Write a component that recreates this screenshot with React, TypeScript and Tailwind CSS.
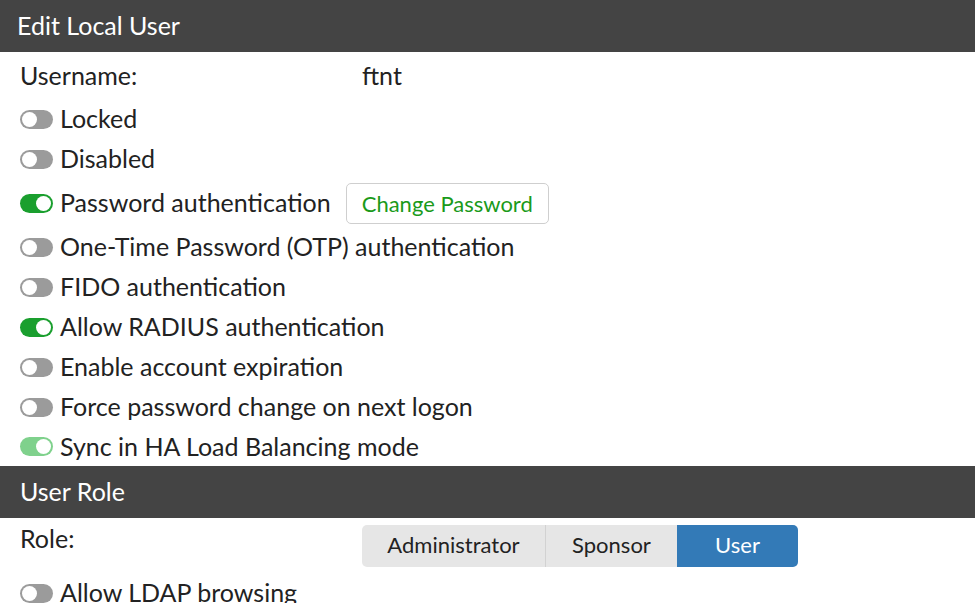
import React from 'react';

type ToggleState = 'off' | 'on' | 'onDisabled';

const Toggle: React.FC<{ state: ToggleState }> = ({ state }) => {
  const track =
    state === 'on' ? 'bg-[#1a9f2e]' : state === 'onDisabled' ? 'bg-[#7fd18c]' : 'bg-[#9b9b9b]';
  return (
    <span className={`relative inline-flex w-[33px] h-[19px] rounded-full shrink-0 ${track}`}>
      <span
        className={`absolute top-[2px] w-[15px] h-[15px] rounded-full bg-white ${
          state === 'off' ? 'left-[2px]' : 'right-[2px]'
        }`}
      />
    </span>
  );
};

const ToggleRow: React.FC<{ label: string; state?: ToggleState; h?: string; children?: React.ReactNode }> = ({
  label,
  state = 'off',
  h = 'h-[40px]',
  children,
}) => (
  <div className={`flex items-center ${h}`}>
    <Toggle state={state} />
    <span className="ml-[7px]">{label}</span>
    {children}
  </div>
);

const SectionHeader: React.FC<{ title: string; pl: string }> = ({ title, pl }) => (
  <div className={`h-[52px] bg-[#444444] text-white flex items-center ${pl} text-[25px]`}>{title}</div>
);

export default function App() {
  return (
    <div className="w-[975px] h-[603px] overflow-hidden bg-white text-[#222] text-[25px] font-['Lato','Noto_Sans',sans-serif]">
      <SectionHeader title="Edit Local User" pl="pl-[17px]" />

      <div className="pl-[20px]">
        <div className="flex items-center h-[40px] mt-[4px]">
          <span className="w-[342px]">Username:</span>
          <span>ftnt</span>
        </div>
        <div className="mt-[3px]">
          <ToggleRow label="Locked" />
        </div>
        <ToggleRow label="Disabled" />
        <ToggleRow label="Password authentication" state="on" h="h-[48px]">
          <button className="ml-[15px] h-[41px] px-[15px] border border-[#cfcfcf] rounded-[5px] text-[#1a9a1a] text-[22px]">
            Change Password
          </button>
        </ToggleRow>
        <ToggleRow label="One-Time Password (OTP) authentication" />
        <ToggleRow label="FIDO authentication" />
        <ToggleRow label="Allow RADIUS authentication" state="on" />
        <ToggleRow label="Enable account expiration" />
        <ToggleRow label="Force password change on next logon" />
        <ToggleRow label="Sync in HA Load Balancing mode" state="onDisabled" h="h-[39px]" />
      </div>

      <SectionHeader title="User Role" pl="pl-[20px]" />

      <div className="pl-[20px]">
        <div className="flex items-start pt-[7px]">
          <span className="w-[342px] leading-[26px]">Role:</span>
          <div className="flex h-[42px] rounded-[5px] overflow-hidden text-[22px]">
            <span className="w-[184px] flex items-center justify-center pb-[3px] bg-[#e6e6e6] border-r border-[#d2d2d2]">
              Administrator
            </span>
            <span className="w-[131px] flex items-center justify-center pb-[3px] bg-[#e6e6e6]">Sponsor</span>
            <span className="w-[121px] flex items-center justify-center pb-[3px] bg-[#337ab7] text-white">User</span>
          </div>
        </div>
        <div className="mt-[6px]">
          <ToggleRow label="Allow LDAP browsing" />
        </div>
      </div>
    </div>
  );
}
